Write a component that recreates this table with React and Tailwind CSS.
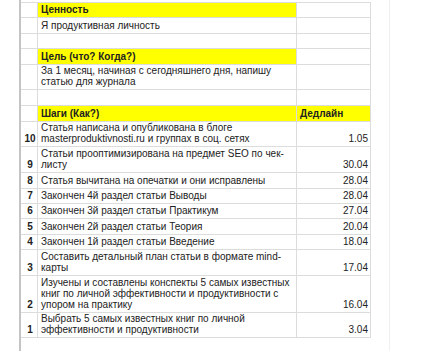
const rows = [
  { h: 15, text: ['Ценность'], head: true },
  { h: 16, text: ['Я продуктивная личность'] },
  { h: 15, text: [] },
  { h: 16, text: ['Цель (что? Когда?)'], head: true },
  { h: 25, text: ['За 1 месяц, начиная с сегодняшнего дня, напишу', 'статью для журнала'] },
  { h: 16, text: [] },
  { h: 16, text: ['Шаги (Как?)'], head: true, deadline: 'Дедлайн' },
  { h: 25, n: '10', text: ['Статья написана и опубликована в блоге', 'masterproduktivnosti.ru и группах в соц. сетях'], date: '1.05' },
  { h: 26, n: '9', text: ['Статьи прооптимизирована на предмет SEO по чек-', 'листу'], date: '30.04' },
  { h: 16, n: '8', text: ['Статья вычитана на опечатки и они исправлены'], date: '28.04' },
  { h: 15, n: '7', text: ['Закончен 4й раздел статьи Выводы'], date: '28.04' },
  { h: 15, n: '6', text: ['Закончен 3й раздел статьи Практикум'], date: '27.04' },
  { h: 16, n: '5', text: ['Закончен 2й раздел статьи Теория'], date: '20.04' },
  { h: 15, n: '4', text: ['Закончен 1й раздел статьи Введение'], date: '18.04' },
  { h: 26, n: '3', text: ['Составить детальный план статьи в формате mind-', 'карты'], date: '17.04' },
  { h: 37, n: '2', text: ['Изучены и составлены конспекты 5 самых известных', 'книг по личной эффективности и продуктивности с', 'упором на практику'], date: '16.04' },
  { h: 25, n: '1', text: ['Выбрать 5 самых известных книг по личной', 'эффективности и продуктивности'], date: '3.04' },
];

export default function App() {
  return (
    <div className="w-[434px] h-[351px] bg-white flex text-[10px] leading-[11px] text-[#222] overflow-hidden" style={{ fontFamily: '"Liberation Sans", Arial, sans-serif' }}>
      <div className="w-[19px] shrink-0" />
      <div className="w-[2px] shrink-0 bg-[#c4c4c4]" />
      <div className="flex flex-col pt-[2px]">
        <div className="border-t border-[#dcdcdc] w-[350px]" />
        {rows.map((r, i) => (
          <div key={i} className="flex border-b border-[#dcdcdc]" style={{ height: r.h }}>
            <div className="w-[17px] shrink-0 border-r border-[#dcdcdc] flex items-end justify-center pl-[2px] pb-[2px] font-bold">
              {r.n}
            </div>
            <div className={`w-[259px] shrink-0 border-r border-[#dcdcdc] flex flex-col justify-end pl-[3px] pb-[2px] whitespace-nowrap ${r.head ? 'bg-[#ffff00] font-bold' : ''}`}>
              {r.text.map((t, j) => (
                <div key={j}>{t}</div>
              ))}
            </div>
            <div className={`w-[74px] shrink-0 border-r border-[#dcdcdc] flex items-end pb-[2px] ${r.deadline ? 'bg-[#ffff00] font-bold justify-start pl-[3px]' : 'justify-end pr-[2px]'}`}>
              {r.deadline || r.date}
            </div>
          </div>
        ))}
      </div>
      <div className="ml-[18px] w-px shrink-0 bg-[#f0f0f0]" />
    </div>
  );
}
